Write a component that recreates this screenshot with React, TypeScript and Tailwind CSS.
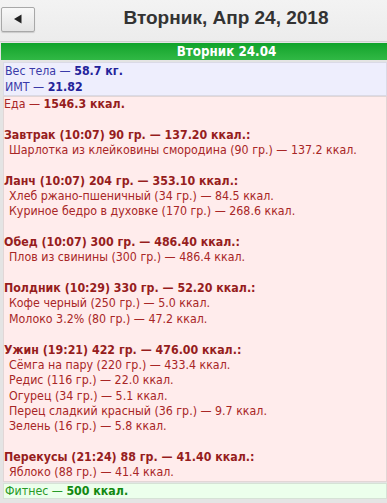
import React from "react";

const meals = [
  {
    h: "Завтрак (10:07) 90 гр. — 137.20 ккал.:",
    items: ["Шарлотка из клейковины смородина (90 гр.) — 137.2 ккал."],
  },
  {
    h: "Ланч (10:07) 204 гр. — 353.10 ккал.:",
    items: ["Хлеб ржано-пшеничный (34 гр.) — 84.5 ккал.", "Куриное бедро в духовке (170 гр.) — 268.6 ккал."],
  },
  { h: "Обед (10:07) 300 гр. — 486.40 ккал.:", items: ["Плов из свинины (300 гр.) — 486.4 ккал."] },
  {
    h: "Полдник (10:29) 330 гр. — 52.20 ккал.:",
    items: ["Кофе черный (250 гр.) — 5.0 ккал.", "Молоко 3.2% (80 гр.) — 47.2 ккал."],
  },
  {
    h: "Ужин (19:21) 422 гр. — 476.00 ккал.:",
    items: [
      "Сёмга на пару (220 гр.) — 433.4 ккал.",
      "Редис (116 гр.) — 22.0 ккал.",
      "Огурец (34 гр.) — 5.1 ккал.",
      "Перец сладкий красный (36 гр.) — 9.7 ккал.",
      "Зелень (16 гр.) — 5.8 ккал.",
    ],
  },
  { h: "Перекусы (21:24) 88 гр. — 41.40 ккал.:", items: ["Яблоко (88 гр.) — 41.4 ккал."] },
];

const font = { fontFamily: '"DejaVu Sans Condensed", "DejaVu Sans", sans-serif' };

export default function App() {
  return (
    <div className="w-[387px] h-[503px] overflow-hidden bg-[#e4e4e4]">
      <div className="h-[41px] flex items-center bg-gradient-to-b from-[#f3f3f3] to-[#ececec]">
        <button className="ml-[1px] mb-[3px] w-[34px] h-[25px] border border-[#a8a8a8] rounded-[2px] bg-gradient-to-b from-[#f8f8f8] to-[#e4e4e4] flex items-center justify-center shadow-[0_1px_1px_rgba(0,0,0,0.15)]">
          <svg width="10" height="10" viewBox="0 0 10 10">
            <path d="M1 5 L8.5 0.5 L8.5 9.5 Z" fill="#222" />
          </svg>
        </button>
        <div
          className="flex-1 ml-[30px] text-center text-[19px] font-bold text-[#333] mb-[4px]"
          style={{ fontFamily: '"Liberation Sans", Arial, sans-serif' }}
        >
          Вторник, Апр 24, 2018
        </div>
      </div>
      <div className="border-t border-[#d0d0d0] pt-[1px] pl-[1px]">
        <div
          className="h-[17px] bg-gradient-to-b from-[#0ea32a] to-[#30b845] text-white font-bold text-[13.3px] leading-[17px] text-center pl-[65px]"
          style={font}
        >
          Вторник 24.04
        </div>
      </div>
      <div className="pl-[3px] pt-[2px] flex flex-col text-[12.3px] leading-[15.35px]" style={font}>
        <div className="bg-[#eeeefd] border border-[#dadae6] px-[1px] leading-[16px] text-[#3a3aa8]">
          <div>
            Вес тела — <b className="text-[#23239a]">58.7 кг.</b>
          </div>
          <div>
            ИМТ — <b className="text-[#23239a]">21.82</b>
          </div>
        </div>
        <div className="bg-[#ffecec] border border-[#e2d6d6] px-0 text-[#a82626]">
          <div>
            Еда — <b className="text-[#961d1d]">1546.3 ккал.</b>
          </div>
          {meals.map((m) => (
            <div key={m.h} className="mt-[15.35px]">
              <div className="font-bold text-[#961d1d]">{m.h}</div>
              {m.items.map((it) => (
                <div key={it} className="pl-[5px]">
                  {it}
                </div>
              ))}
            </div>
          ))}
        </div>
        <div className="mt-[1px] bg-[#ecffec] border border-[#d6e2d6] px-[1px] h-[16px] leading-[14px] text-[#279a27]">
          Фитнес — <b className="text-[#118811]">500 ккал.</b>
        </div>
      </div>
    </div>
  );
}
